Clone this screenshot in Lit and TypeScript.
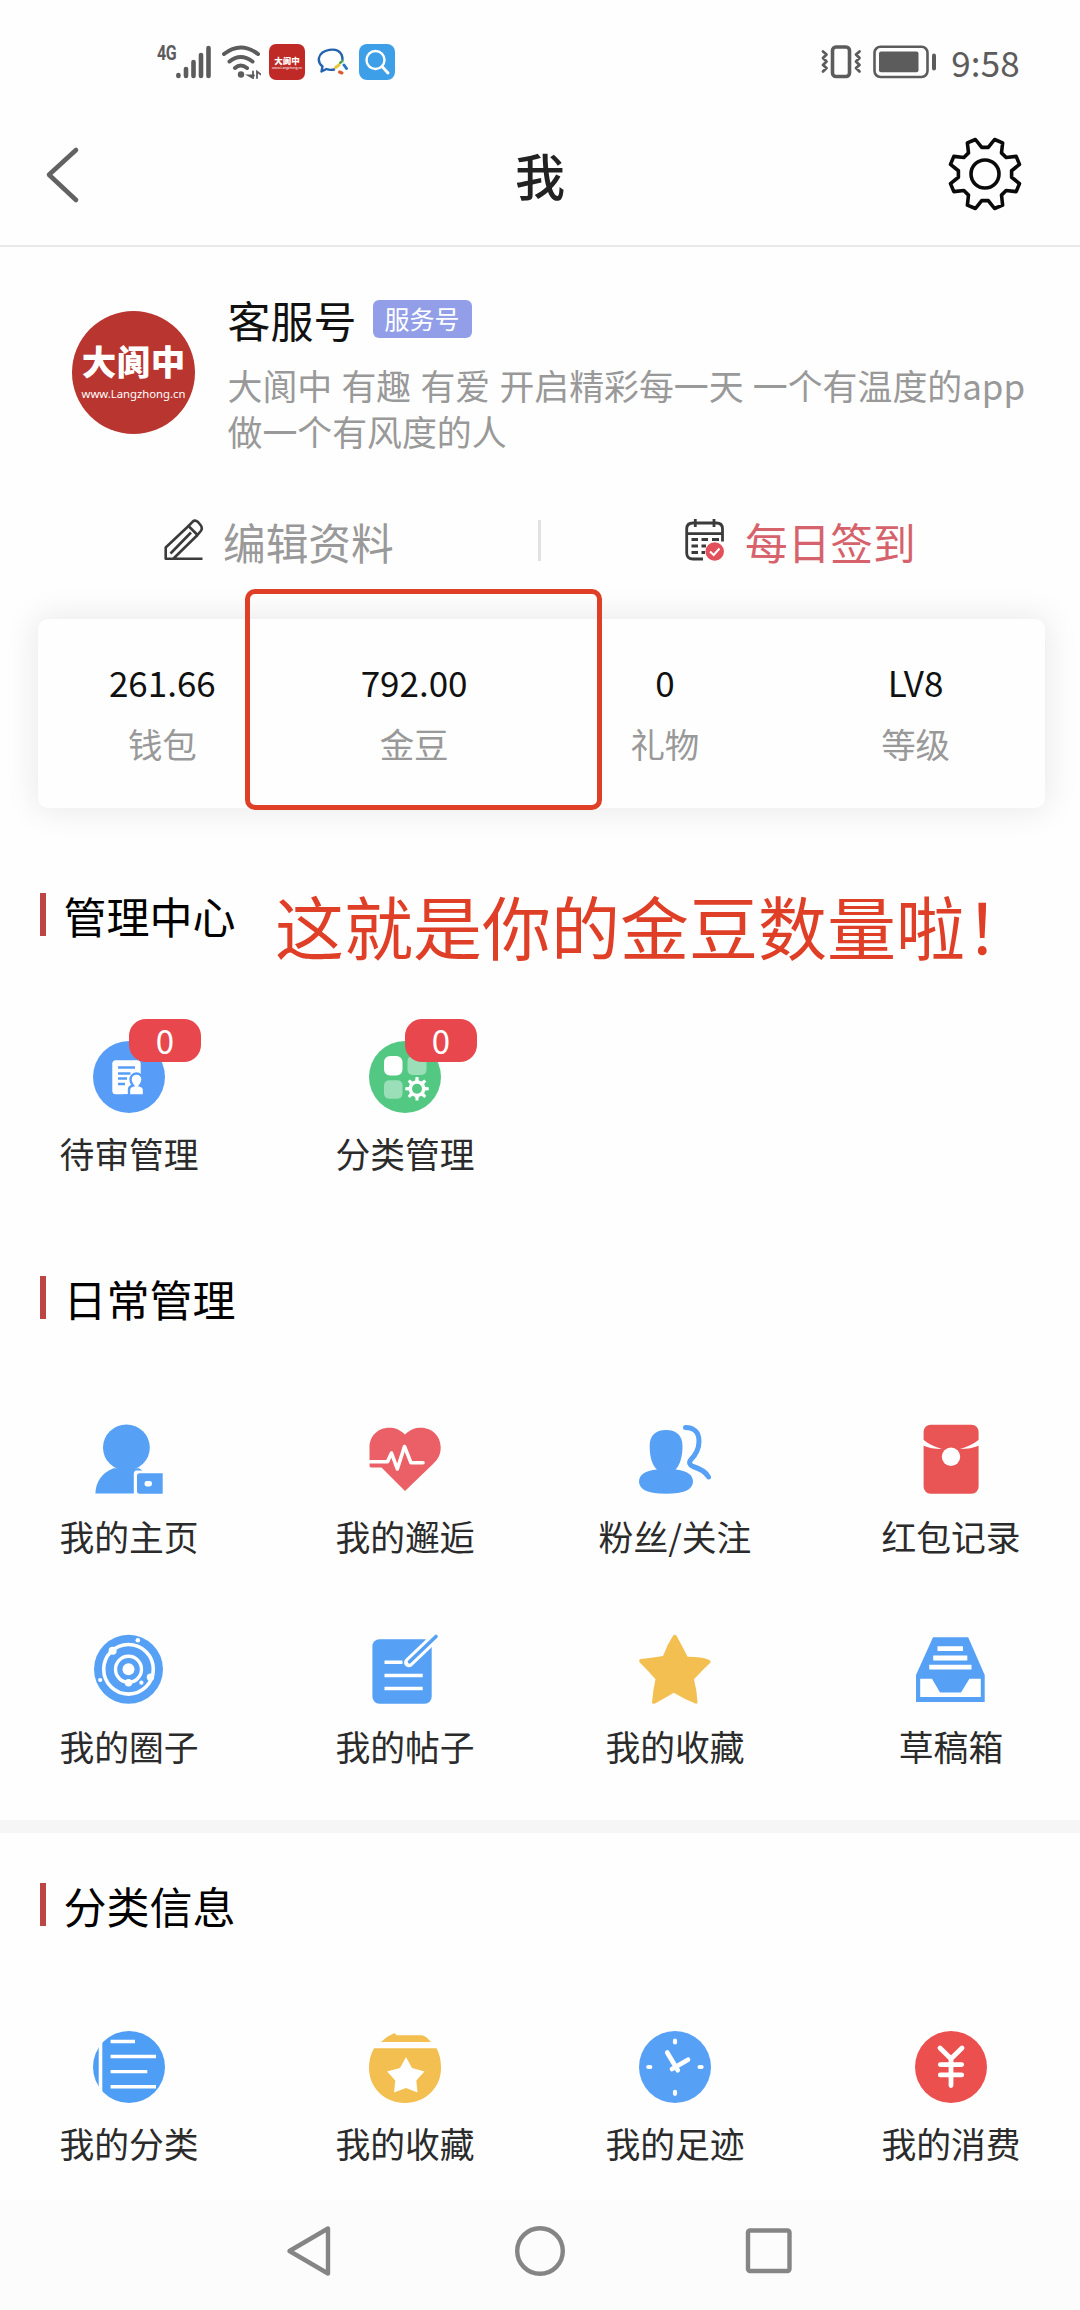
import { LitElement, html, css, svg, type TemplateResult, type SVGTemplateResult } from "lit";
import { customElement, property } from "lit/decorators.js";

const BLUE = "#56a1f5";
const RED = "#e85554";
const GOLD = "#f3bf50";

/** Point list of a cog outline centred on (cx, cy). */
function cog(cx: number, cy: number, root: number, tip: number, rootHalf: number, tipHalf: number, first: number): string {
  const points: string[] = [];
  for (let i = 0; i < 8; i++) {
    const mid = first + i * 45;
    for (const [offset, radius] of [[-rootHalf, root], [-tipHalf, tip], [tipHalf, tip], [rootHalf, root]]) {
      const a = ((mid + offset) * Math.PI) / 180;
      points.push(`${(cx + radius * Math.cos(a)).toFixed(2)},${(cy + radius * Math.sin(a)).toFixed(2)}`);
    }
  }
  return points.join(" ");
}

const icons: Record<string, SVGTemplateResult> = {
  review: svg`
    <circle cx="36" cy="36" r="36" fill="#579df8"/>
    <rect x="19.3" y="19.3" width="28.4" height="34" rx="3.5" fill="#fff"/>
    <path d="M25 26.5H42M25 32.5H37.5M25 37.5H34M25 43H32" stroke="#579df8" stroke-width="2.4"/>
    <path d="M36 55V48.5Q36 45.500 40 44.500Q37.500 41.500 37.500 38.500A6 6 0 0 1 49.500 38.500Q49.500 41.500 47 44.500Q51 45.500 51 48.500V55Z" fill="#fff" stroke="#579df8" stroke-width="2.4"/>
    <path d="M30 53.300H54V58H30Z" fill="#579df8"/>`,
  classify: svg`
    <circle cx="36" cy="36" r="36" fill="#52c883"/>
    <rect x="15" y="15" width="18.500" height="19.500" rx="6" fill="#fff"/>
    <rect x="38.500" y="15" width="19" height="19" rx="5" fill="#fff" opacity=".42"/>
    <rect x="15" y="39.300" width="18.500" height="18.500" rx="5" fill="#fff" opacity=".42"/>
    <polygon points=${cog(48, 47.7, 8.5, 11.8, 12, 7, 0)} fill="#fff"/>
    <circle cx="48" cy="47.700" r="5" fill="#52c883"/>`,
  home: svg`
    <ellipse cx="33.400" cy="23.600" rx="23.400" ry="23" fill=${BLUE}/>
    <path d="M2.400 69.500Q3 51.500 20.500 44.300H46L49.500 46.500H43.500Q40.800 46.500 40.800 50V69.500Z" fill=${BLUE}/>
    <path d="M46.500 49.300H69.700V69.700H46.500Q44 69.700 44 67V52Q44 49.300 46.500 49.300Z" fill=${BLUE}/>
    <rect x="51.500" y="57" width="7.500" height="5.400" rx="2.400" fill="#fff"/>`,
  heart: svg`
    <path d="M36 10.500C41 5.500 46 3.700 52 3.700C63.500 3.700 71.700 12.500 71.700 23.500C71.700 30.500 69 35.500 63.500 40.500L36 67L12.500 43.500H2Q.5 43.500 .5 41V24C.3 12 9 3.700 20 3.700C26 3.700 31 5.500 36 10.500Z" fill="#ea6066"/>
    <path d="M0 37.700H18.500L22.500 29L28.300 45L35.500 22.500L42 38.800H54" fill="none" stroke="#fff" stroke-width="3.600" stroke-linecap="round" stroke-linejoin="round"/>`,
  fans: svg`
    <path d="M27 6C38 6 43.500 12 43.500 22C43.500 33 41 41 36.500 45.500C48 46.500 54 51 54 57.500C54 65.500 45 69.800 27 69.800S0 65.500 0 57.500C0 51 6 46.500 18 45.500C13 41 10.700 33 10.700 22C10.700 12 16 6 27 6Z" fill=${BLUE}/>
    <path d="M46.500 3.500C55 3.500 60 8.500 60 17C60 25 56 31.500 52 35.500C49.500 38.500 50.500 41 54 42.500C62 45 67 48 69.500 53" fill="none" stroke=${BLUE} stroke-width="5" stroke-linecap="round"/>`,
  envelope: svg`
    <rect x="8.600" y=".7" width="55" height="69" rx="7" fill=${RED}/>
    <path d="M8 15.500Q16 22 27 25Q16 25 8 21.500ZM64.200 15.500Q56 22 45 25Q56 25 64.200 21.500Z" fill="#fff"/>
    <circle cx="36" cy="32.700" r="9.200" fill="#fff"/>`,
  circle: svg`
    <circle cx="35.500" cy="35.300" r="34.500" fill=${BLUE}/>
    <g fill="none" stroke="#fff"><circle cx="35.500" cy="35.300" r="24.800" stroke-width="3.600"/><circle cx="35.500" cy="35.300" r="13" stroke-width="3.400"/></g>
    <g fill="#fff"><circle cx="35.500" cy="35.300" r="6"/><circle cx="44.800" cy="6.300" r="2.300"/><circle cx="19.600" cy="16.700" r="4"/><circle cx="57.500" cy="43.300" r="3.700"/><circle cx="35.500" cy="48.700" r="3.700"/><circle cx="7.200" cy="46" r="2.100"/><circle cx="48.400" cy="48.700" r="2.100"/></g>`,
  post: svg`
    <rect x="3.400" y="5.300" width="59.300" height="64.400" rx="7" fill=${BLUE}/>
    <path d="M39.800 28.500L67 2.500" stroke="#fff" stroke-width="9.500" stroke-linecap="round"/>
    <path d="M40.500 27.800L67 2.500" stroke=${BLUE} stroke-width="3.600" stroke-linecap="round"/>
    <path d="M15.500 28.300H33.500M15.500 41.500H53.700M15.500 54.500H53.700" stroke="#fff" stroke-width="3.500"/>`,
  star: svg`
    <path d="M34 1.800Q35.800 -.3 37.500 1.800Q42 10 48.600 22.700Q62 22.500 69 25.500Q72 26.500 71.500 28.500Q64 35.500 55 45.300Q58 57 58.500 68.500Q58.500 70 56.500 69.500Q46 65.500 34.800 58.700Q26 64 16 69.500Q13 70.300 13 68.500Q14 56 16.500 45.300Q9 36.500 .3 28Q-.3 25.500 1.500 25Q12 23.800 24 22Q28 11 34 1.800Z" fill=${GOLD}/>`,
  draft: svg`
    <path d="M18 3.300H53.200L69.700 41V68H1V41Z" fill=${BLUE}/>
    <path d="M5.200 44.700H17L25 58.500H46L54.400 44.700H65.800V63H5.200Z" fill="#fff"/>
    <path d="M22.500 14.700H48M18.200 24H52.300M14.200 33.200H56.500" stroke="#fff" stroke-width="4.800"/>`,
  list: svg`
    <circle cx="36" cy="36" r="36" fill="#4e9ef6"/>
    <path d="M7.500 12V61" stroke="#fff" stroke-width="3.600"/>
    <path d="M17.600 10.500H42M17.600 25.500H63M17.600 40.600H54.300M17.600 55.700H63" stroke="#fff" stroke-width="3.400"/>`,
  jar: svg`
    <path d="M12 11Q18 5 25 2.200Q26.500 2 27.500 4.200H53Q57 5 62 11ZM5 17.300H67.500Q72 25 72 37C72 57 56 72 36 72S0 57 0 37Q0 26 5 17.300Z" fill=${GOLD}/>
    <path d="M37 26L43 37L55.500 40.500L47.300 49.500L48.500 61.500L37 57L25 61.500L26.300 49.500L18 40.500L31 37Z" fill="#fff"/>`,
  clock: svg`
    <circle cx="36" cy="36" r="36" fill=${BLUE}/>
    <g stroke="#fff" stroke-width="4.200" stroke-linecap="round"><path d="M36 9.500V11.500M36 60.800V62.800M9.300 36H11.300M60.600 36H62.600"/><path d="M28.200 21.500L38.800 39.300M49 28.700L33 38" stroke-width="4.600"/></g>`,
  money: svg`
    <circle cx="36" cy="36" r="36" fill="#eb504f"/>
    <path d="M25 17L36 27.800L47 17M36 27.800V54.500M25.300 33.600H46.700M25.300 43.900H46.700" fill="none" stroke="#fff" stroke-width="4.800" stroke-linecap="round"/>`,
};

interface Entry {
  icon: string;
  label: string;
  badge?: number;
}

const MANAGE: Entry[] = [
  { icon: "review", label: "待审管理", badge: 0 },
  { icon: "classify", label: "分类管理", badge: 0 },
];
const DAILY: Entry[] = [
  { icon: "home", label: "我的主页" },
  { icon: "heart", label: "我的邂逅" },
  { icon: "fans", label: "粉丝/关注" },
  { icon: "envelope", label: "红包记录" },
  { icon: "circle", label: "我的圈子" },
  { icon: "post", label: "我的帖子" },
  { icon: "star", label: "我的收藏" },
  { icon: "draft", label: "草稿箱" },
];
const CLASSIFIED: Entry[] = [
  { icon: "list", label: "我的分类" },
  { icon: "jar", label: "我的收藏" },
  { icon: "clock", label: "我的足迹" },
  { icon: "money", label: "我的消费" },
];
const STATS = [
  { value: "261.66", label: "钱包" },
  { value: "792.00", label: "金豆" },
  { value: "0", label: "礼物" },
  { value: "LV8", label: "等级" },
];

@customElement("menu-section")
class MenuSection extends LitElement {
  static styles = css`
    :host { display: block; }
    .head { display: flex; align-items: center; height: 43px; padding-left: 40px; gap: 17.500px; }
    .bar { width: 6px; height: 43px; background: #bb4644; }
    .title { margin: 0; font-size: 43px; line-height: 44px; font-weight: 400; color: #000; }
    .grid {
      display: grid; grid-template-columns: 276px 270px 276px 180px; row-gap: 78px;
      padding: 105px 0 0 39px;
    }
    .item { width: 180px; display: flex; flex-direction: column; align-items: center; gap: 20px; }
    .icon { position: relative; width: 72px; height: 72px; }
    .icon svg { display: block; width: 72px; height: 72px; overflow: visible; }
    .label { font-size: 34.800px; line-height: 40px; color: #2b2b2b; white-space: nowrap; }
    .badge {
      position: absolute; left: 36px; top: -22px; width: 72px; height: 43px; border-radius: 17px;
      background: #e8474e; color: #fff; font-size: 33px; line-height: 43px; text-align: center;
    }
  `;

  @property() heading = "";
  @property({ attribute: false }) entries: Entry[] = [];

  render() {
    return html`
      <div class="head"><span class="bar"></span><h2 class="title">${this.heading}</h2></div>
      <div class="grid">
        ${this.entries.map(
          (e): TemplateResult => html`
            <div class="item">
              <div class="icon">
                <svg viewBox="0 0 72 72">${icons[e.icon]}</svg>
                ${e.badge === undefined ? "" : html`<span class="badge">${e.badge}</span>`}
              </div>
              <span class="label">${e.label}</span>
            </div>`,
        )}
      </div>
    `;
  }
}

@customElement("app-root")
class AppRoot extends LitElement {
  static styles = css`
    :host {
      display: flex; flex-direction: column; position: relative; box-sizing: border-box;
      width: 1080px; height: 2310px; overflow: hidden; background: #fefefe;
      font-family: "Noto Sans CJK SC", "Noto Sans", sans-serif; color: #111;
    }
    svg { display: block; flex: none; }

    .status { display: flex; justify-content: space-between; height: 60px; padding: 44px 60px 0 157px; color: #5c5c5c; }
    .status-side { display: flex; height: 36px; align-items: center; }
    .net { align-self: flex-start; font: 700 20px/19px "Roboto", sans-serif; letter-spacing: -.5px; width: 19px; transform: scaleX(.8); transform-origin: left; }
    .wifi { margin-left: 11px; }
    .mini {
      display: flex; flex-direction: column; align-items: center; justify-content: center; box-sizing: border-box;
      width: 36px; height: 36px; margin-left: 8px; border-radius: 7px; background: #c02a26; color: #fff;
    }
    .mini-name { font-size: 8.500px; line-height: 10px; font-weight: 900; }
    .mini-url { font-size: 3.300px; line-height: 5px; }
    .chat { margin-left: 12px; }
    .search { margin-left: 11px; }
    .battery { margin-left: 11px; }
    .time { margin-left: 14px; font-size: 35px; line-height: 36px; letter-spacing: .2px; }

    .header { display: flex; align-items: center; justify-content: space-between; box-sizing: border-box; height: 143px; padding: 0 57px 2px 44px; border-bottom: 2px solid #e9e9e9; }
    .page-title { margin: 0; font-size: 50px; line-height: 60px; font-weight: 500; color: #222; padding-left: 49px; }

    .profile { display: flex; height: 161px; padding: 51px 40px 0 72px; }
    .avatar {
      display: flex; flex-direction: column; align-items: center; box-sizing: border-box; flex: none;
      width: 123px; height: 123px; margin-top: 13px; padding-top: 31px; border-radius: 50%; background: #b93630; color: #fff;
    }
    .avatar-name { font-size: 34.500px; line-height: 36px; font-weight: 900; white-space: nowrap; }
    .avatar-url { font: 400 11.300px/18px "Noto Sans", sans-serif; margin-top: 7px; white-space: nowrap; }
    .about { margin-left: 32.500px; }
    .name-row { display: flex; align-items: center; gap: 16px; height: 42px; }
    .name { font-size: 43px; line-height: 42px; }
    .tag { width: 99px; height: 38px; border-radius: 6px; background: #929fe8; color: #fff; font-size: 25px; line-height: 36px; text-align: center; }
    .bio { margin: 22px 0 0; font-size: 34.900px; line-height: 46px; word-spacing: 1.400px; color: #999; white-space: nowrap; }

    .actions { display: flex; align-items: center; height: 44px; margin-top: 59px; color: #999; font-size: 42.700px; line-height: 44px; }
    .action { display: flex; align-items: center; box-sizing: border-box; flex: 0 0 538px; }
    .action-text { margin-top: 1px; }
    .edit { padding-left: 164px; gap: 19px; }
    .sign { padding-left: 144px; gap: 20px; color: #d6626c; }
    .split { width: 3px; height: 41px; background: #e2e2e2; }

    .stats {
      display: grid; grid-template-columns: repeat(4, 1fr); box-sizing: border-box; height: 189px;
      margin: 57px 35px 85px 38px; padding-right: 4px; flex: none;
      border-radius: 10px; background: #fefefe; box-shadow: 0 0 32px 4px rgba(0, 0, 0, .08);
    }
    .stat { display: flex; flex-direction: column; align-items: center; padding-top: 43px; }
    .value { font-size: 35px; line-height: 40px; color: #111; }
    .caption { margin-top: 21px; font-size: 34.500px; line-height: 40px; color: #999; }
    .stat:first-child .value, .stat:first-child .caption { margin-left: -2px; }

    .second { margin-top: 103px; }
    .band { height: 13px; margin: 54px 0 50px; background: #f6f6f6; flex: none; }

    .nav { display: flex; justify-content: center; gap: 178px; margin-top: auto; height: 110px; padding-top: 25px; box-sizing: border-box; background: #fcfcfc; }

    .marker { position: absolute; left: 245px; top: 589px; box-sizing: border-box; width: 357px; height: 221px; border: 5.500px solid #e03f27; border-radius: 10px; }
    .note { position: absolute; left: 275px; top: 885px; font-size: 69px; line-height: 80px; color: #e03f27; white-space: nowrap; }
  `;

  render() {
    return html`
      <div class="status">
        <div class="status-side">
          <span class="net">4G</span>
          <svg width="35" height="34" viewBox="0 0 35 34" stroke="#5c5c5c" stroke-width="4.600" stroke-linecap="round">
            <path d="M2.400 30V31M10 24V31M17.500 17V31M25 10V31M32.500 3V31"/>
          </svg>
          <svg class="wifi" width="39" height="34" viewBox="0 0 39 34" fill="none" stroke="#5c5c5c" stroke-width="4" stroke-linecap="round">
            <path d="M2 9Q18.500 -4 36 9M7.500 16.500Q18.500 7.500 30.500 16.500M13 23Q18.500 18 25 23"/>
            <circle cx="19" cy="29.500" r="3.200" fill="#5c5c5c" stroke="none"/>
            <path d="M31 26.500V33L26.500 30.500H32M35 33V26.500L39 29.500" stroke-width="1.800"/>
          </svg>
          <span class="mini"><span class="mini-name">大阆中</span><span class="mini-url">www.Langzhong.cn</span></span>
          <svg class="chat" width="31" height="28" viewBox="0 0 31 28" fill="none" stroke-width="2.400" stroke-linecap="round" stroke-linejoin="round">
            <path d="M17 21.500Q13 22.500 9.500 21L4.500 23.500L5.500 18.500Q1 15 2 10C4 1 20 -1.500 24.500 6.500Q25.500 9 25.500 11.500" stroke="#2363ae"/>
            <path d="M23 15L25.500 13" stroke="#4aa84c"/><path d="M18.500 19.500L22 17" stroke="#e8c63a" stroke-width="3"/>
            <path d="M22.500 24L25 25" stroke="#d8592c" stroke-width="3"/><path d="M27 17L29.500 20.500" stroke="#2a78c4" stroke-width="3"/>
          </svg>
          <svg class="search" width="36" height="36" viewBox="0 0 36 36">
            <rect width="36" height="36" rx="8" fill="#3d9fe8"/>
            <circle cx="16.500" cy="16" r="9" fill="none" stroke="#fff" stroke-width="2.400"/>
            <path d="M23 22.500L29 29" stroke="#fff" stroke-width="3" stroke-linecap="round"/>
          </svg>
        </div>
        <div class="status-side">
          <svg width="41" height="34" viewBox="0 0 41 34" fill="none" stroke="#5c5c5c" stroke-linecap="round" stroke-linejoin="round">
            <rect x="11.500" y="2" width="17" height="29.500" rx="3.500" stroke-width="3.600"/>
            <path d="M2 6.500L5.500 9.500L2 13L5.500 16.500L2 20L5.500 23L2 26.500M38.500 6.500L35 9.500L38.500 13L35 16.500L38.500 20L35 23L38.500 26.500" stroke-width="2.800"/>
          </svg>
          <svg class="battery" width="64" height="34" viewBox="0 0 64 34">
            <rect x="1.500" y="1.700" width="53" height="30.300" rx="6" fill="none" stroke="#5c5c5c" stroke-width="2.600"/>
            <rect x="6" y="6.500" width="39.500" height="20.800" rx="2" fill="#5c5c5c"/>
            <rect x="59" y="8.500" width="4" height="17" rx="2" fill="#5c5c5c"/>
          </svg>
          <span class="time">9:58</span>
        </div>
      </div>

      <div class="header">
        <svg width="40" height="60" viewBox="0 0 40 60" fill="none" stroke="#626262" stroke-width="4.600" stroke-linecap="round" stroke-linejoin="round"><path d="M32 6L5 30.800L32 56"/></svg>
        <h1 class="page-title">我</h1>
        <svg width="76" height="76" viewBox="-38 -38 76 76" fill="none" stroke="#0a0a0a" stroke-width="3.600" stroke-linejoin="round">
          <polygon points=${cog(0, 0, 26.8, 35.8, 15.5, 7, 22.5)}/>
          <circle r="14"/>
        </svg>
      </div>

      <div class="profile">
        <div class="avatar"><span class="avatar-name">大阆中</span><span class="avatar-url">www.Langzhong.cn</span></div>
        <div class="about">
          <div class="name-row"><span class="name">客服号</span><span class="tag">服务号</span></div>
          <p class="bio">大阆中 有趣 有爱 开启精彩每一天 一个有温度的app<br>做一个有风度的人</p>
        </div>
      </div>

      <div class="actions">
        <div class="action edit">
          <svg width="40" height="42" viewBox="0 0 40 42" fill="none" stroke="#3b3b3b" stroke-width="2.600" stroke-linejoin="round">
            <path d="M38.500 39.800H1.700V28.500L24.500 7M33.500 16L9.500 39.500M6.500 34.500L27 13.500" />
            <path d="M24.500 7L28.500 2.800Q31 .5 34 3L36.500 6Q39 9 36.800 12L33.500 16L24.500 7Z"/>
          </svg>
          <span class="action-text">编辑资料</span>
        </div>
        <span class="split"></span>
        <div class="action sign">
          <svg width="40" height="42" viewBox="0 0 40 42" fill="none" stroke="#3b3b3b" stroke-width="2.800">
            <path d="M18 40H8Q1.700 40 1.700 34V10Q1.700 4 8 4H31.500Q37.500 4 37.500 10V22.500M1.700 14.700H37.500M10.300 0V8M29 0V8"/>
            <path d="M6.500 20.500H13M16.500 20.500H23M27 20.500H34M6.500 27H13M16.500 27H21M6.500 33.500H13M16.500 33.500H20"/>
            <circle cx="29.700" cy="32.500" r="9.300" fill="#e2505c" stroke="none"/>
            <path d="M25 32.500L28.700 36L34.500 29.500" stroke="#fff" stroke-width="2"/>
          </svg>
          <span class="action-text">每日签到</span>
        </div>
      </div>

      <div class="stats">
        ${STATS.map((s) => html`<div class="stat"><span class="value">${s.value}</span><span class="caption">${s.label}</span></div>`)}
      </div>

      <menu-section heading="管理中心" .entries=${MANAGE}></menu-section>
      <menu-section class="second" heading="日常管理" .entries=${DAILY}></menu-section>
      <div class="band"></div>
      <menu-section heading="分类信息" .entries=${CLASSIFIED}></menu-section>

      <div class="nav">
        <svg width="52" height="52" viewBox="0 0 52 52" fill="none" stroke="#858585" stroke-width="4.400" stroke-linejoin="round"><path d="M44 3.500V48.500L5.500 26Z"/></svg>
        <svg width="52" height="52" viewBox="0 0 52 52" fill="none" stroke="#858585" stroke-width="4.400"><circle cx="26" cy="26" r="22.800"/></svg>
        <svg width="52" height="52" viewBox="0 0 52 52" fill="none" stroke="#858585" stroke-width="4.400"><rect x="4" y="5.500" width="41.500" height="40.500" rx="2"/></svg>
      </div>

      <div class="marker"></div>
      <div class="note">这就是你的金豆数量啦！</div>
    `;
  }
}
